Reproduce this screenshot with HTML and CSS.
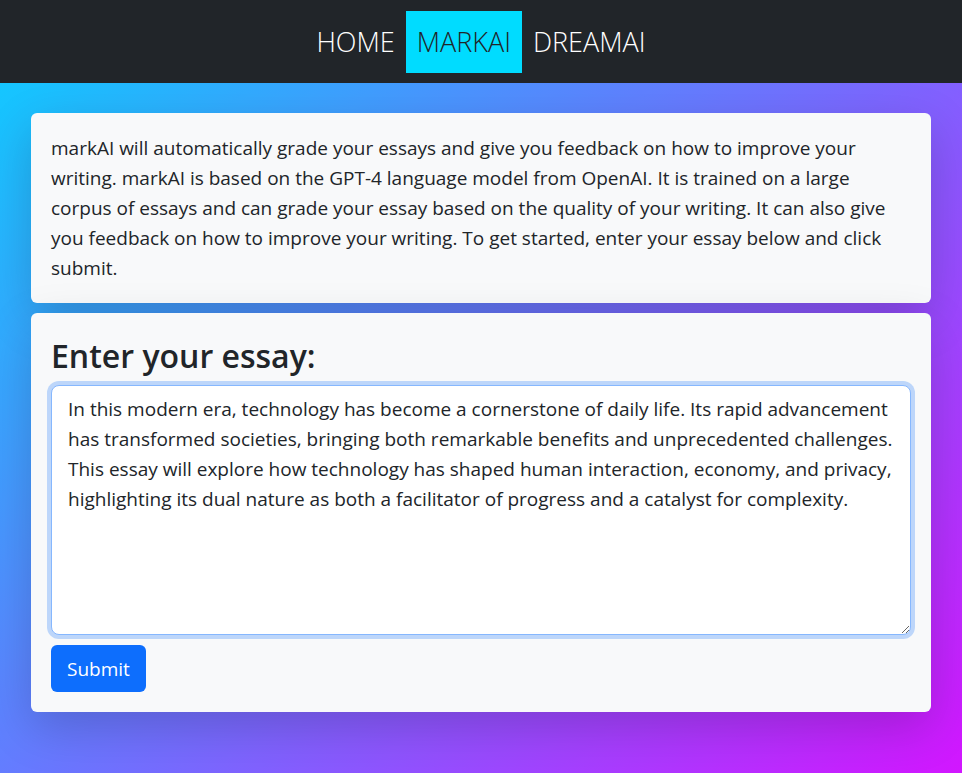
FILE: index.html
```html
<!DOCTYPE html>
<html lang="en">
<head>
<meta charset="utf-8">
<title>markAI</title>
<link rel="stylesheet" href="styles.css">
</head>
<body>
<nav class="navbar">
  <a class="nav-link" href="#">HOME</a>
  <a class="nav-link active" href="#">MARKAI</a>
  <a class="nav-link" href="#">DREAMAI</a>
</nav>
<main class="main">
  <section class="card">
    <p class="intro">markAI will automatically grade your essays and give you feedback on how to improve your writing. markAI is based on the GPT-4 language model from OpenAI. It is trained on a large corpus of essays and can grade your essay based on the quality of your writing. It can also give you feedback on how to improve your writing. To get started, enter your essay below and click submit.</p>
  </section>
  <section class="card">
    <form class="essay-form">
      <label class="title" for="essay">Enter your essay:</label>
      <textarea id="essay" class="essay">In this modern era, technology has become a cornerstone of daily life. Its rapid advancement has transformed societies, bringing both remarkable benefits and unprecedented challenges. This essay will explore how technology has shaped human interaction, economy, and privacy, highlighting its dual nature as both a facilitator of progress and a catalyst for complexity.</textarea>
      <div><button type="button" class="btn">Submit</button></div>
    </form>
  </section>
</main>
</body>
</html>
```
FILE: styles.css
```css
* { box-sizing: border-box; }
html, body { margin: 0; height: 100%; }
body {
  font-family: "Open Sans", "Noto Sans", sans-serif;
  color: #212529;
  background: linear-gradient(135deg, #0bcfff 0%, #d216ff 100%);
  display: flex;
  flex-direction: column;
}
.navbar {
  background: #212529;
  height: 83px;
  display: flex;
  justify-content: center;
  align-items: center;
  gap: 0;
}
.nav-link {
  color: #fff;
  text-decoration: none;
  font-size: 27px;
  font-weight: 300;
  padding: 0 11px;
  height: 62px;
  display: flex;
  align-items: center;
}
.nav-link.active {
  background: #00dcff;
  color: #212529;
}
.main {
  flex: 1;
  padding: 30px 31px;
  display: flex;
  flex-direction: column;
  gap: 10px;
}
.card {
  background: #f8f9fa;
  border-radius: 6px;
  padding: 20px;
  box-shadow: 0 1rem 3rem rgba(0,0,0,.175);
}
.intro {
  margin: 0;
  font-size: 19px;
  line-height: 30px;
}
.essay-form {
  display: flex;
  flex-direction: column;
}
.title {
  font-size: 32px;
  font-weight: 600;
  line-height: 38px;
  margin: 4px 0 10px;
}
.essay {
  font-family: inherit;
  color: #212529;
  font-size: 19px;
  line-height: 30px;
  height: 250px;
  padding: 8px 16px;
  border: 1px solid #86b7fe;
  border-radius: 8px;
  background: #fff;
  box-shadow: 0 0 0 4px rgba(13,110,253,.25);
  outline: none;
  resize: vertical;
}
.btn {
  margin-top: 10px;
  background: #0d6efd;
  color: #fff;
  border: 0;
  border-radius: 6px;
  font-family: inherit;
  font-size: 19px;
  height: 47px;
  padding: 0 16px;
}
```
